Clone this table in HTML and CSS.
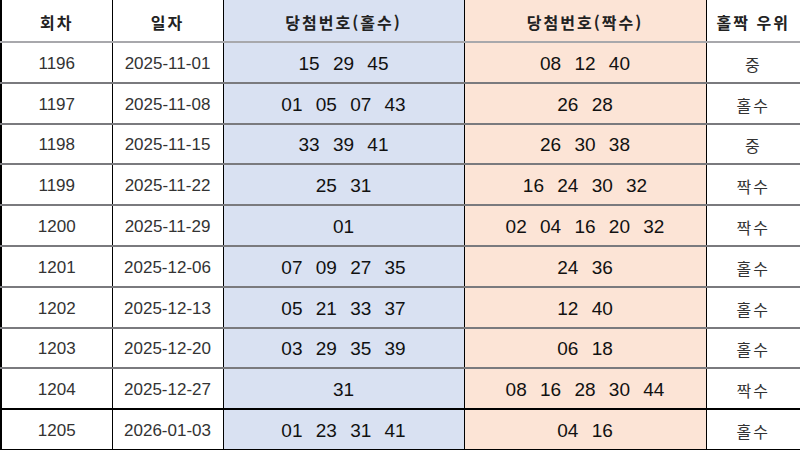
FILE: index.html
```html
<!DOCTYPE html>
<html lang="ko">
<head>
<meta charset="utf-8">
<link rel="stylesheet" href="styles.css">
</head>
<body>
<table class="lotto">
  <colgroup>
    <col class="c-round"><col class="c-date"><col class="c-odd"><col class="c-even"><col class="c-win">
  </colgroup>
  <thead>
    <tr>
      <th>회차</th>
      <th>일자</th>
      <th class="odd">당첨번호(홀수)</th>
      <th class="even">당첨번호(짝수)</th>
      <th>홀짝 우위</th>
    </tr>
  </thead>
  <tbody>
    <tr><td class="num">1196</td><td class="num">2025-11-01</td><td class="odd balls">15 29 45</td><td class="even balls">08 12 40</td><td class="ko">중</td></tr>
    <tr><td class="num">1197</td><td class="num">2025-11-08</td><td class="odd balls">01 05 07 43</td><td class="even balls">26 28</td><td class="ko">홀수</td></tr>
    <tr><td class="num">1198</td><td class="num">2025-11-15</td><td class="odd balls">33 39 41</td><td class="even balls">26 30 38</td><td class="ko">중</td></tr>
    <tr><td class="num">1199</td><td class="num">2025-11-22</td><td class="odd balls">25 31</td><td class="even balls">16 24 30 32</td><td class="ko">짝수</td></tr>
    <tr><td class="num">1200</td><td class="num">2025-11-29</td><td class="odd balls">01</td><td class="even balls">02 04 16 20 32</td><td class="ko">짝수</td></tr>
    <tr><td class="num">1201</td><td class="num">2025-12-06</td><td class="odd balls">07 09 27 35</td><td class="even balls">24 36</td><td class="ko">홀수</td></tr>
    <tr><td class="num">1202</td><td class="num">2025-12-13</td><td class="odd balls">05 21 33 37</td><td class="even balls">12 40</td><td class="ko">홀수</td></tr>
    <tr><td class="num">1203</td><td class="num">2025-12-20</td><td class="odd balls">03 29 35 39</td><td class="even balls">06 18</td><td class="ko">홀수</td></tr>
    <tr class="before-last"><td class="num">1204</td><td class="num">2025-12-27</td><td class="odd balls">31</td><td class="even balls">08 16 28 30 44</td><td class="ko">짝수</td></tr>
    <tr class="last"><td class="num">1205</td><td class="num">2026-01-03</td><td class="odd balls">01 23 31 41</td><td class="even balls">04 16</td><td class="ko">홀수</td></tr>
  </tbody>
</table>
</body>
</html>
```
FILE: styles.css
```css
html, body {
  margin: 0;
  padding: 0;
  background: #ffffff;
}

.lotto {
  width: 800px;
  height: 450px;
  border-collapse: collapse;
  table-layout: fixed;
  font-family: "Liberation Sans", "Noto Sans CJK KR", sans-serif;
  color: #1a1a1a;
}

.c-round { width: 111px; }
.c-date { width: 111px; }
.c-odd { width: 241px; }
.c-even { width: 242px; }
.c-win { width: 95px; }

.lotto th,
.lotto td {
  padding: 3px 0 0;
  text-align: center;
  vertical-align: middle;
  border-right: 1px solid #000;
  border-bottom: 2px solid #7a7a7e;
  white-space: nowrap;
}

.lotto th:first-child,
.lotto td:first-child {
  border-left: 2px solid #000;
}

.lotto th:last-child,
.lotto td:last-child {
  border-right: 2px solid #000;
}

.lotto thead tr {
  height: 42px;
}

.lotto th {
  font-family: "Noto Sans CJK KR", sans-serif;
  font-size: 16px;
  font-weight: 700;
  letter-spacing: 2px;
  color: #222;
  border-bottom: 2px solid #a8a8ac;
}

.lotto tbody tr {
  height: 40.8px;
}

.lotto .before-last td {
  border-bottom: 2px solid #000;
}

.lotto .last td {
  border-bottom: 2px solid #000;
}

.odd { background: #d9e1f2; }
.even { background: #fce4d6; }

.num {
  font-size: 17px;
  color: #333;
}

.balls {
  font-size: 19px;
  word-spacing: 8px;
  color: #111;
}

.ko {
  font-family: "Noto Sans CJK KR", sans-serif;
  font-size: 16px;
  letter-spacing: 2px;
  color: #333;
}
```
